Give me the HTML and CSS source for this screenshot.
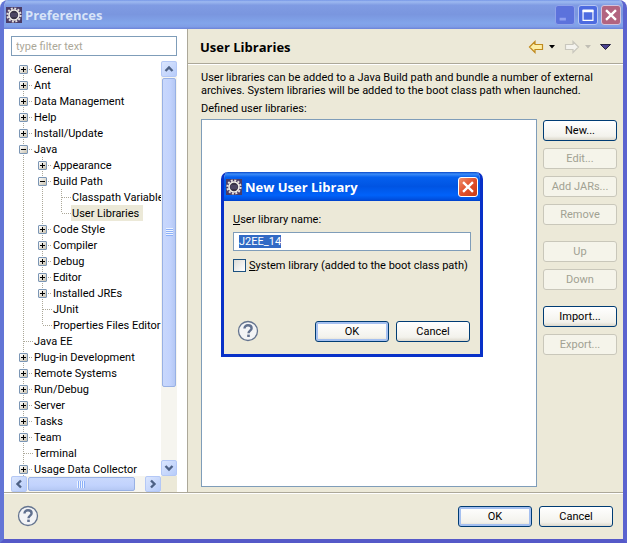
FILE: index.html
```html
<!DOCTYPE html>
<html lang="en">
<head>
<meta charset="UTF-8">
<meta name="viewport" content="width=device-width, initial-scale=1.0">
<title>Preferences</title>
<link rel="stylesheet" href="styles.css">
</head>
<body>

<!-- shared icons -->
<svg class="sprite" width="0" height="0" aria-hidden="true">
  <symbol id="gear" viewBox="0 0 16 16">
    <rect width="16" height="16" fill="#4b3c66"/>
    <circle cx="8" cy="8" r="6.6" fill="none" stroke="#e4e0dc" stroke-width="2" stroke-dasharray="2 1.46"/>
    <circle cx="8" cy="8" r="5" fill="#393347" stroke="#f2efe9" stroke-width="1.6"/>
    <path d="M4.5 7h7M4.5 9h7" stroke="#625b82"/>
  </symbol>
  <symbol id="help" viewBox="0 0 22 22">
    <circle cx="11" cy="11" r="9.5" fill="#f3f4f6" stroke="#64748f" stroke-width="1.3"/>
    <path d="M7.5 8.6C7.5 6.4 9 5.3 11 5.3s3.6 1.1 3.6 3c0 2.3-3.1 2.5-3.1 5" fill="none" stroke="#61718f" stroke-width="2.4"/>
    <rect x="10.2" y="14.6" width="2.6" height="2.4" fill="#61718f"/>
  </symbol>
  <symbol id="cross" viewBox="0 0 20 20">
    <path d="M4.5 4.5l11 11M15.5 4.5l-11 11" stroke="#fff" stroke-width="2.6"/>
  </symbol>
  <symbol id="chevron" viewBox="0 0 10 10">
    <path d="M1.5 7L5 3.5L8.5 7" fill="none" stroke="#4d6185" stroke-width="2.4"/>
  </symbol>
</svg>

<div class="window">
  <header class="titlebar">
    <svg class="app-icon" aria-hidden="true"><use href="#gear"/></svg>
    <h1>Preferences</h1>
    <button type="button" class="caption minimize" aria-label="Minimize"><svg viewBox="0 0 20 20"><path d="M4 14.5h7" stroke="#8f9ff0" stroke-width="3"/></svg></button>
    <button type="button" class="caption maximize" aria-label="Maximize"><svg viewBox="0 0 20 20"><path d="M4.500 5h11v11h-11z" fill="none" stroke="#fff" stroke-width="1.300"/><path d="M4 5.500h12" stroke="#fff" stroke-width="3"/></svg></button>
    <button type="button" class="caption close" aria-label="Close"><svg><use href="#cross"/></svg></button>
  </header>

  <div class="panes">
    <nav class="sidebar">
      <input type="text" class="filter" placeholder="type filter text" aria-label="Filter preferences">
      <div class="tree-box">
        <div class="tree-view">
          <ul class="tree">
            <li><div class="row"><button type="button" class="toggle" aria-label="Expand General"></button><span class="label">General</span></div></li>
            <li><div class="row"><button type="button" class="toggle" aria-label="Expand Ant"></button><span class="label">Ant</span></div></li>
            <li><div class="row"><button type="button" class="toggle" aria-label="Expand Data Management"></button><span class="label">Data Management</span></div></li>
            <li><div class="row"><button type="button" class="toggle" aria-label="Expand Help"></button><span class="label">Help</span></div></li>
            <li><div class="row"><button type="button" class="toggle" aria-label="Expand Install/Update"></button><span class="label">Install/Update</span></div></li>
            <li>
              <div class="row"><button type="button" class="toggle open" aria-label="Collapse Java"></button><span class="label">Java</span></div>
              <ul>
                <li><div class="row"><button type="button" class="toggle" aria-label="Expand Appearance"></button><span class="label">Appearance</span></div></li>
                <li>
                  <div class="row"><button type="button" class="toggle open" aria-label="Collapse Build Path"></button><span class="label">Build Path</span></div>
                  <ul>
                    <li><div class="row leaf"><span class="label">Classpath Variable</span></div></li>
                    <li><div class="row leaf"><span class="label selected">User Libraries</span></div></li>
                  </ul>
                </li>
                <li><div class="row"><button type="button" class="toggle" aria-label="Expand Code Style"></button><span class="label">Code Style</span></div></li>
                <li><div class="row"><button type="button" class="toggle" aria-label="Expand Compiler"></button><span class="label">Compiler</span></div></li>
                <li><div class="row"><button type="button" class="toggle" aria-label="Expand Debug"></button><span class="label">Debug</span></div></li>
                <li><div class="row"><button type="button" class="toggle" aria-label="Expand Editor"></button><span class="label">Editor</span></div></li>
                <li><div class="row"><button type="button" class="toggle" aria-label="Expand Installed JREs"></button><span class="label">Installed JREs</span></div></li>
                <li><div class="row leaf"><span class="label">JUnit</span></div></li>
                <li><div class="row leaf"><span class="label">Properties Files Editor</span></div></li>
              </ul>
            </li>
            <li><div class="row leaf"><span class="label">Java EE</span></div></li>
            <li><div class="row"><button type="button" class="toggle" aria-label="Expand Plug-in Development"></button><span class="label">Plug-in Development</span></div></li>
            <li><div class="row"><button type="button" class="toggle" aria-label="Expand Remote Systems"></button><span class="label">Remote Systems</span></div></li>
            <li><div class="row"><button type="button" class="toggle" aria-label="Expand Run/Debug"></button><span class="label">Run/Debug</span></div></li>
            <li><div class="row"><button type="button" class="toggle" aria-label="Expand Server"></button><span class="label">Server</span></div></li>
            <li><div class="row"><button type="button" class="toggle" aria-label="Expand Tasks"></button><span class="label">Tasks</span></div></li>
            <li><div class="row"><button type="button" class="toggle" aria-label="Expand Team"></button><span class="label">Team</span></div></li>
            <li><div class="row leaf"><span class="label">Terminal</span></div></li>
            <li><div class="row"><button type="button" class="toggle" aria-label="Expand Usage Data Collector"></button><span class="label">Usage Data Collector</span></div></li>
          </ul>
        </div>
        <div class="scrollbar vertical">
          <button type="button" class="arrow up" aria-label="Scroll up"><svg><use href="#chevron"/></svg></button>
          <div class="track"><div class="thumb"></div></div>
          <button type="button" class="arrow down" aria-label="Scroll down"><svg><use href="#chevron"/></svg></button>
        </div>
        <div class="scrollbar horizontal">
          <button type="button" class="arrow left" aria-label="Scroll left"><svg><use href="#chevron"/></svg></button>
          <div class="track"><div class="thumb"></div></div>
          <button type="button" class="arrow right" aria-label="Scroll right"><svg><use href="#chevron"/></svg></button>
        </div>
        <div class="corner"></div>
      </div>
    </nav>

    <main class="page">
      <div class="page-header">
        <h2>User Libraries</h2>
        <button type="button" class="tool" aria-label="Back"><svg width="16" height="14" viewBox="0 0 16 14"><path d="M1.5 7L7 1.5v3h7.5v5H7v3z" fill="#fdeea5" stroke="#c08a1e" stroke-width="1.2"/></svg></button>
        <button type="button" class="tool" aria-label="Back history"><svg width="6" height="4" viewBox="0 0 6 4"><path d="M0 0h6L3 3.5z" fill="#000"/></svg></button>
        <button type="button" class="tool next" aria-label="Forward" disabled><svg width="16" height="14" viewBox="0 0 16 14"><path d="M14.5 7L9 1.5v3H1.5v5H9v3z" fill="#f4f3ee" stroke="#c9c7bd" stroke-width="1.2"/></svg></button>
        <button type="button" class="tool" aria-label="Forward history" disabled><svg width="6" height="4" viewBox="0 0 6 4"><path d="M0 0h6L3 3.5z" fill="#c0beb4"/></svg></button>
        <button type="button" class="tool menu" aria-label="Menu"><svg width="11" height="6" viewBox="0 0 11 6"><path d="M.5.5h10L5.5 5.5z" fill="#4a4290" stroke="#25233f"/></svg></button>
      </div>
      <div class="page-body">
        <p>User libraries can be added to a Java Build path and bundle a number of external archives. System libraries will be added to the boot class path when launched.</p>
        <h3 id="defined">Defined user libraries:</h3>
        <div class="libraries">
          <div class="list" role="listbox" aria-labelledby="defined"></div>
          <div class="actions">
            <button type="button" class="btn">New...</button>
            <button type="button" class="btn" disabled>Edit...</button>
            <button type="button" class="btn" disabled>Add JARs...</button>
            <button type="button" class="btn" disabled>Remove</button>
            <button type="button" class="btn group" disabled>Up</button>
            <button type="button" class="btn" disabled>Down</button>
            <button type="button" class="btn group">Import...</button>
            <button type="button" class="btn" disabled>Export...</button>
          </div>
        </div>
      </div>
    </main>
  </div>

  <footer class="footer">
    <button type="button" class="help" aria-label="Help"><svg><use href="#help"/></svg></button>
    <button type="button" class="btn default">OK</button>
    <button type="button" class="btn">Cancel</button>
  </footer>
</div>

<form class="dialog" role="dialog" aria-labelledby="dialog-title">
  <header class="titlebar active">
    <svg class="app-icon" aria-hidden="true"><use href="#gear"/></svg>
    <h2 id="dialog-title">New User Library</h2>
    <button type="button" class="caption close" aria-label="Close"><svg><use href="#cross"/></svg></button>
  </header>
  <div class="dialog-body">
    <label for="library-name"><u>U</u>ser library name:</label>
    <input type="text" id="library-name" value="J2EE_14">
    <div class="check">
      <input type="checkbox" id="system-library">
      <label for="system-library"><u>S</u>ystem library (added to the boot class path)</label>
    </div>
    <div class="dialog-buttons">
      <button type="button" class="help" aria-label="Help"><svg><use href="#help"/></svg></button>
      <button type="button" class="btn default">OK</button>
      <button type="button" class="btn">Cancel</button>
    </div>
  </div>
</form>

<script>
  var nameField = document.getElementById('library-name');
  nameField.focus();
  nameField.select();
</script>

</body>
</html>
```

FILE: styles.css
```css
* {
  box-sizing: border-box;
}

body {
  margin: 0;
  background: #fff;
  color: #000;
  font-family: Roboto, "Liberation Sans", sans-serif;
  font-size: 11px;
  line-height: 13px;
}

h1, h2, h3, p, ul {
  margin: 0;
  padding: 0;
}

ul {
  list-style: none;
}

button, input {
  font: inherit;
  color: inherit;
}

button {
  padding: 0;
}

svg {
  display: block;
}

.sprite {
  position: absolute;
}

/* main window */
.window {
  display: flex;
  flex-direction: column;
  height: 100vh;
  min-height: 540px;
  border: solid #6375d6;
  border-width: 0 4px 4px;
  border-color: #6375d6 #5b63cf #5559c8 #6375d6;
  border-radius: 8px 8px 0 0;
  background: #ece9d8;
  overflow: hidden;
}

.titlebar {
  display: flex;
  align-items: center;
  gap: 3px;
  flex: none;
  height: 29px;
  padding: 1px 2px 0;
  background: linear-gradient(#7697e7, #9db9f0 6%, #7f9be3 18%, #7a96df 50%, #82a5ea 80%, #7f9de6 92%, #6b83d8);
}

.titlebar h1, .titlebar h2 {
  flex: 1;
  color: #d8e4f8;
  font-family: "Open Sans", "Noto Sans", sans-serif;
  font-size: 13px;
  line-height: 20px;
}

.app-icon {
  width: 16px;
  height: 16px;
}

.caption {
  width: 20px;
  height: 20px;
  border: 1px solid #b7c6f3;
  border-radius: 3px;
  background: #4d6be0;
}

.caption svg {
  width: 18px;
  height: 18px;
}

.caption.minimize {
  background: #5c72dc;
  border-color: #8fa2ea;
}

.caption.close {
  background: #b26480;
  border-color: #d3c3dc;
}

.panes {
  display: flex;
  flex: 1;
  min-height: 0;
}

/* preference tree */
.sidebar {
  display: flex;
  flex-direction: column;
  gap: 5px;
  flex: none;
  width: 184px;
  padding: 7px 10px 0 7px;
  border-right: 1px solid #aca899;
  background: #fff;
}

.filter {
  flex: none;
  width: 100%;
  height: 20px;
  padding: 0 4px;
  border: 1px solid #7f9db9;
  background: #fff;
}

.filter::placeholder {
  color: #aca899;
  opacity: 1;
}

.tree-box {
  display: grid;
  grid-template-columns: minmax(0, 1fr) 16px;
  grid-template-rows: minmax(0, 1fr) 16px;
  flex: 1;
  min-height: 0;
}

.tree-view {
  overflow: hidden;
}

.tree {
  padding-left: 8px;
}

.tree ul {
  padding-left: 19px;
}

/* dotted guide running down through the toggles */
.tree li {
  background: repeating-linear-gradient(#aca899 0 1px, transparent 1px 2px) 4px 0 / 1px 100% no-repeat;
}

.tree > li:first-child {
  background-position-y: 8px;
}

.tree ul li:last-child {
  background-size: 1px 8px;
}

.row {
  display: flex;
  align-items: center;
  height: 16px;
  white-space: nowrap;
}

.row::before {
  content: "";
  order: 1;
  flex: none;
  width: 5px;
  height: 1px;
  background: repeating-linear-gradient(90deg, transparent 0 1px, #aca899 1px 2px);
}

.row.leaf::before {
  width: 10px;
  margin-left: 4px;
}

.toggle {
  flex: none;
  width: 9px;
  height: 9px;
  border: 1px solid #7b96b5;
  border-radius: 1px;
  background:
    linear-gradient(#000, #000) center / 5px 1px no-repeat,
    linear-gradient(#000, #000) center / 1px 5px no-repeat,
    linear-gradient(135deg, #fff, #c9c2b0);
}

.toggle.open {
  background:
    linear-gradient(#000, #000) center / 5px 1px no-repeat,
    linear-gradient(135deg, #fff, #c9c2b0);
}

.label {
  order: 2;
  padding: 2px 0 0 1px;
  line-height: 14px;
}

.label.selected {
  padding-right: 4px;
  background: #ece9d8;
}

/* scrollbars */
.scrollbar {
  display: flex;
  background: #f6f5ef;
}

.vertical {
  flex-direction: column;
}

.track {
  flex: 1;
  min-width: 0;
  min-height: 0;
  padding: 1px;
}

.arrow {
  display: grid;
  place-items: center;
  flex: none;
  width: 16px;
  height: 16px;
  border: 1px solid #b4c8f6;
  border-radius: 2px;
  background: linear-gradient(135deg, #dbe6fe, #b7ccfa);
}

.arrow svg {
  width: 10px;
  height: 10px;
}

.down svg {
  transform: rotate(180deg);
}

.left svg {
  transform: rotate(-90deg);
}

.right svg {
  transform: rotate(90deg);
}

.thumb {
  border: 1px solid #98b1e4;
  border-radius: 2px;
}

.vertical .thumb {
  height: 81%;
  background:
    repeating-linear-gradient(#eef4fe 0 1px, #8cb0f8 1px 2px) center / 7px 8px no-repeat,
    linear-gradient(90deg, #c9d8fc, #c2d3fd 60%, #b5c8f4);
}

.horizontal .thumb {
  width: 92%;
  height: 100%;
  background:
    repeating-linear-gradient(90deg, #eef4fe 0 1px, #8cb0f8 1px 2px) center / 8px 7px no-repeat,
    linear-gradient(#c9d8fc, #c2d3fd 60%, #b5c8f4);
}

.corner {
  background: #ece9d8;
}

/* right side */
.page {
  display: flex;
  flex-direction: column;
  flex: 1;
  min-width: 0;
}

.page-header {
  display: flex;
  align-items: center;
  gap: 5px;
  flex: none;
  height: 35px;
  padding: 2px 12px 0 12px;
  border-bottom: 1px solid #aca899;
  box-shadow: 0 1px #fff;
}

.page-header h2 {
  flex: 1;
  font-family: "Open Sans", "Noto Sans", sans-serif;
  font-size: 13px;
  line-height: 20px;
}

.tool {
  border: 0;
  background: none;
}

.tool.next {
  margin-left: 4px;
}

.tool.menu {
  margin-left: 4px;
}

.page-body {
  display: flex;
  flex-direction: column;
  flex: 1;
  min-height: 0;
  padding: 7px 6px 5px 13px;
}

.page-body p {
  padding-right: 16px;
}

.page-body h3 {
  margin: 5px 0 4px;
  font-size: 11px;
  font-weight: normal;
}

.libraries {
  display: flex;
  flex: 1;
  gap: 6px;
  min-height: 0;
}

.list {
  flex: 1;
  border: 1px solid #7f9db9;
  background: #fff;
}

.actions {
  display: flex;
  flex-direction: column;
  gap: 7px;
  padding-top: 1px;
}

.btn {
  flex: none;
  width: 74px;
  height: 21px;
  border: 1px solid #003c74;
  border-radius: 3px;
  background: linear-gradient(#fff, #f3f2ec 80%, #dcd8cc);
}

.btn.group {
  margin-top: 9px;
}

.btn.default {
  box-shadow: inset 0 0 0 2px #a5c0f0;
}

.btn:disabled {
  border-color: #c9c7ba;
  background: #f5f4ea;
  color: #a1a192;
}

.footer {
  display: flex;
  align-items: center;
  gap: 7px;
  flex: none;
  height: 47px;
  padding: 0 10px 0 13px;
  border-top: 1px solid #aca899;
  box-shadow: inset 0 1px #fff;
}

.help {
  margin-right: auto;
  border: 0;
  background: none;
}

.help svg {
  width: 22px;
  height: 22px;
}

/* dialog floating over the window */
.dialog {
  position: absolute;
  top: 172px;
  left: 221px;
  width: 262px;
  border: solid #0831c8;
  border-width: 0 3px 3px;
  border-radius: 7px 7px 0 0;
  background: #ece9d8;
  overflow: hidden;
}

.titlebar.active {
  background: linear-gradient(#0848c8, #3c8cf8 7%, #0560ee 18%, #0054e3 50%, #0062fa 80%, #0050e0 94%, #0040c8);
}

.titlebar.active h2 {
  color: #fff;
}

.active .caption.close {
  border-color: #fff;
  background: linear-gradient(135deg, #f0906c, #e0502c 50%, #c83c14);
}

.dialog-body {
  display: flex;
  flex-direction: column;
  padding: 12px 9px;
}

.dialog-body input[type=text] {
  height: 19px;
  margin-top: 6px;
  padding: 0 5px;
  border: 1px solid #7f9db9;
  background: #fff;
  outline: none;
}

.dialog-body input::selection {
  background: #316ac5;
  color: #fff;
}

.check {
  display: flex;
  align-items: center;
  gap: 3px;
  margin-top: 8px;
}

.check input {
  appearance: none;
  width: 13px;
  height: 13px;
  margin: 0;
  border: 1px solid #1c5180;
  background: linear-gradient(135deg, #dcdcd7, #fff);
}

.check input:checked {
  background: #21a121;
}

.dialog-buttons {
  display: flex;
  align-items: center;
  gap: 7px;
  margin-top: 48px;
  padding: 0 1px 0 4px;
}
```
